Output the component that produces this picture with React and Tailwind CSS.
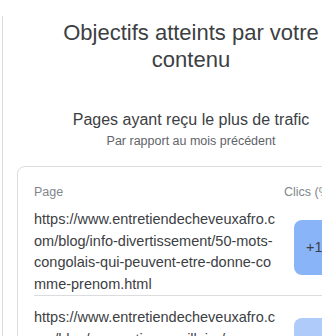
import React from 'react';

const rows = [
  {
    url: 'https://www.entretiendecheveuxafro.com/blog/info-divertissement/50-mots-congolais-qui-peuvent-etre-donne-comme-prenom.html',
    value: '+1',
    color: 'bg-[#8ab4f8]',
    pad: 'pt-[11px] pb-0',
  },
  {
    url: 'https://www.entretiendecheveuxafro.com/blog/ma-routine-capillaire/comment-prendre-soin-de-ses-cheveux.html',
    value: '+1',
    color: 'bg-[#aecbfa]',
    pad: 'pt-[11px] pb-[2px] border-t border-[#dadce0]',
  },
];

export default function App() {
  return (
    <div className="w-[322px] h-[336px] overflow-hidden bg-white font-['Liberation_Sans',Arial,sans-serif] flex">
      <div className="w-[2px] shrink-0" />
      <div className="shrink-0 w-px mt-[16px] bg-[#dadce0]" />
      <div className="w-[376px] shrink-0 flex flex-col items-center">
        <h1 className="mt-[19px] text-[22px] leading-[27px] text-[#3c4043] text-center w-[300px]">
          Objectifs atteints par votre contenu
        </h1>
        <h2 className="mt-[36px] text-[16px] leading-[22px] text-[#3c4043] text-center">
          Pages ayant reçu le plus de trafic
        </h2>
        <p className="mt-[2px] text-[12.5px] leading-[16px] text-[#5f6368] text-center">
          Par rapport au mois précédent
        </p>
        <div className="mt-[17px] self-stretch mx-[14px] border border-[#dadce0] rounded-[8px] px-[16px] pt-[19px]">
          <div className="flex justify-between text-[12.5px] leading-[12px] text-[#80868b]">
            <span>Page</span>
            <span className="w-[64px]">Clics (%)</span>
          </div>
          {rows.map((r, i) => (
            <div key={i} className={`flex items-start gap-[16px] ${r.pad}`}>
              <div className="w-[244px] shrink-0 break-all text-[14.5px] leading-[21.5px] text-[#3c4043]">
                {r.url}
              </div>
              <div className={`mt-[11px] w-[56px] h-[55px] shrink-0 rounded-[8px] ${r.color} flex items-center pl-[12px] text-[14.5px] text-[#3c4043]`}>
                {r.value}
              </div>
            </div>
          ))}
        </div>
      </div>
    </div>
  );
}
